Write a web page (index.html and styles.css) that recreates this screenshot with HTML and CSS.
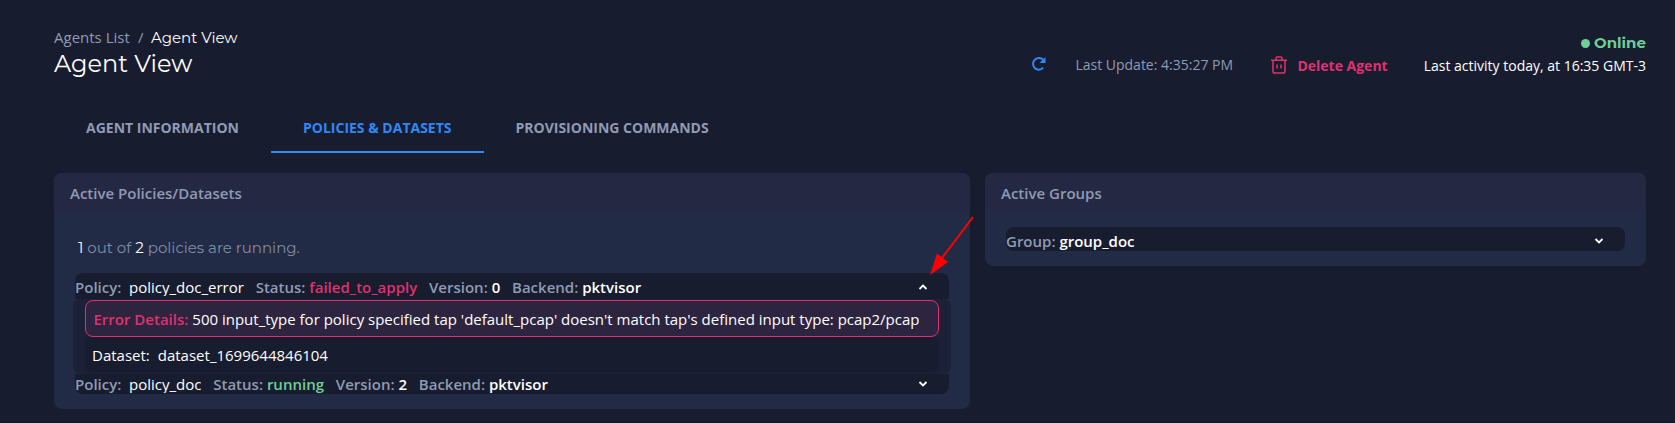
FILE: index.html
```html
<!DOCTYPE html>
<html lang="en">
<head>
<meta charset="utf-8">
<title>Agent View</title>
<link rel="stylesheet" href="styles.css">
</head>
<body>
<header class="top">
  <div class="heading">
    <nav class="crumbs"><span class="crumb-link">Agents List</span><span class="sep">/</span><span class="brand crumb-now">Agent View</span></nav>
    <h1 class="brand title">Agent View</h1>
  </div>
  <div class="actions">
    <svg class="refresh" width="16" height="16" viewBox="0 0 16 16"><path d="M12.2 11.7A5.8 5.8 0 1 1 12.5 4.400" fill="none" stroke="#3088f5" stroke-width="2"/><path d="M14.500 1v6H8.500z" fill="#3088f5"/></svg>
    <span class="update">Last Update: 4:35:27 PM</span>
    <svg class="trash" width="16" height="18" viewBox="0 0 16 18" fill="none" stroke="#df316f" stroke-width="1.5"><path d="M0 4.2h16M5 4V2.2Q5 1 6.2 1h3.6Q11 1 11 2.2V4M2 4.2v11Q2 17 3.8 17h8.4Q14 17 14 15.200v-11M6 8.500v4M10 8.500v4"/></svg>
    <span class="delete">Delete Agent</span>
    <div class="state"><div class="brand online"><i class="dot"></i>Online</div><div class="activity">Last activity today, at 16:35 GMT-3</div></div>
  </div>
</header>
<nav class="tabs"><span class="tab t1">Agent Information</span><span class="tab t2 active">Policies &amp; Datasets</span><span class="tab t3">Provisioning Commands</span></nav>
<main class="cards">
  <section class="card policies">
    <h2 class="card-head">Active Policies/Datasets</h2>
    <p class="brand summary"><b>1</b> out of <b>2</b> policies are running.</p>
    <div class="list">
      <div class="row first">
        <span class="label l1">Policy:</span><span class="name n1">policy_doc_error</span><span class="label l2">Status:</span><span class="value failed">failed_to_apply</span><span class="label l3">Version:</span><span class="value">0</span><span class="label l3">Backend:</span><span class="value">pktvisor</span>
        <svg class="chev" width="10" height="6" viewBox="0 0 10 6"><path d="M1.500 5L5 1.500 8.500 5"/></svg>
      </div>
      <div class="details">
        <div class="error"><b>Error Details:</b> <span>500 input_type for policy specified tap 'default_pcap' doesn't match tap's defined input type: pcap2/pcap</span></div>
        <div class="dataset"><span>Dataset:</span><span>dataset_1699644846104</span></div>
      </div>
      <div class="row last">
        <span class="label l1">Policy:</span><span class="name n2">policy_doc</span><span class="label l2">Status:</span><span class="value running">running</span><span class="label l3">Version:</span><span class="value">2</span><span class="label l3">Backend:</span><span class="value">pktvisor</span>
        <svg class="chev" width="10" height="6" viewBox="0 0 10 6"><path d="M1.500 1L5 4.500 8.500 1"/></svg>
      </div>
    </div>
    <svg class="arrow" width="46" height="62" viewBox="0 0 46 62"><path d="M44 2L13 43" stroke="#f00" stroke-width="2"/><path d="M1 60L8 38.500 19 47z" fill="#f00"/></svg>
  </section>
  <section class="card groups">
    <h2 class="card-head">Active Groups</h2>
    <div class="row group"><span class="label">Group:</span><span class="value">group_doc</span><svg class="chev" width="10" height="6" viewBox="0 0 10 6"><path d="M1.500 1L5 4.500 8.500 1"/></svg></div>
  </section>
</main>
</body>
</html>
```
FILE: styles.css
```css
* { box-sizing: border-box; }
body { margin: 0; height: 423px; overflow: hidden; background: #181c2f; border-bottom: 2px solid #151729; color: #fff; font: 15px/20px "Open Sans", sans-serif; }
h1, h2, p { margin: 0; font-weight: 400; }
.brand { font-family: Montserrat, Inter, sans-serif; }
.top { display: flex; justify-content: space-between; padding: 27px 29px 0 54px; height: 108px; }
.crumbs { display: flex; height: 20px; color: #8f9bb3; }
.crumb-link { width: 84px; }
.sep { width: 13px; }
.crumb-now { font-size: 15px; line-height: 21px; color: #fff; }
.title { margin-top: 1px; font-size: 24px; line-height: 32px; }
.actions { display: flex; align-items: flex-start; font-size: 14px; padding-top: 1px; }
.refresh { margin: 28px 28px 0 0; }
.update { margin: 27px 38px 0 0; width: 158px; color: #8f9bb3; white-space: nowrap; }
.trash { margin: 28px 10px 0 0; }
.delete { margin: 28px 36px 0 0; font-weight: 700; color: #df316f; }
.state { text-align: right; }
.online { margin-top: 5px; font-weight: 700; color: #6fcf97; font-size: 15px; }
.dot { display: inline-block; width: 9px; height: 9px; border-radius: 50%; background: #6fcf97; margin-right: 4px; }
.activity { line-height: 26px; }
.tabs { display: flex; height: 45px; margin-left: 54px; font-size: 14px; font-weight: 700; text-transform: uppercase; color: #8f9bb3; }
.tab { padding: 10px 32px 0; white-space: nowrap; }
.t1 { width: 217px; }
.t2 { width: 213px; }
.t3 { padding-left: 31.500px; }
.active { color: #3088f5; border-bottom: 2px solid #3088f5; }
.cards { display: flex; gap: 15px; align-items: flex-start; padding: 20px 29px 0 54px; }
.card { position: relative; border-radius: 8px; background: #222b45; }
.policies { width: 916px; height: 236px; }
.groups { width: 661px; height: 93px; }
.card-head { height: 40px; padding: 10px 16px; border-radius: 8px 8px 0 0; background: #252842; color: #8f9bb3; font-size: 15px; line-height: 20px; font-weight: 600; }
.summary { padding: 25px 0 0 24px; height: 60px; font-size: 15px; font-weight: 400; color: #808ba5; }
.summary b { color: #fff; font-weight: 400; }
.list { margin-left: 19px; width: 878px; }
.row { display: flex; margin: 0 2px; overflow: hidden; background: #181c2f; white-space: nowrap; line-height: 20px; }
.first { height: 26px; padding-top: 4px; border-radius: 8px 8px 0 0; }
.last { height: 20px; border-radius: 0 0 8px 8px; }
.label { color: #8f9bb3; font-weight: 600; margin-right: 3.900px; }
.l1 { width: 54px; margin-right: 0; }
.l2 { margin-left: 11.800px; }
.l3 { margin-left: 11.800px; }
.name { height: 19px; overflow: hidden; }
.value { font-weight: 600; }
.failed { color: #df316f; }
.running { color: #6fcf97; }
.chev { margin: 7px 21px 0 auto; fill: none; stroke: #fff; stroke-width: 1.800; }
.details { height: 75px; padding: 1px 12px 0; background: #1c2138; border-radius: 8px; }
.error { height: 37px; padding: 8px 7.500px; border: 1px solid #df316f; border-radius: 8px; background: #2d243f; white-space: nowrap; }
.error b { color: #df316f; font-weight: 600; }
.dataset { display: flex; gap: 8px; height: 35px; padding: 8px 7px; border-radius: 8px; background: #181c2f; }
.group { height: 24px; margin: 14px 21px 0; padding-top: 4px; border-radius: 8px; }
.arrow { position: absolute; left: 875px; top: 42px; z-index: 2; }
```
